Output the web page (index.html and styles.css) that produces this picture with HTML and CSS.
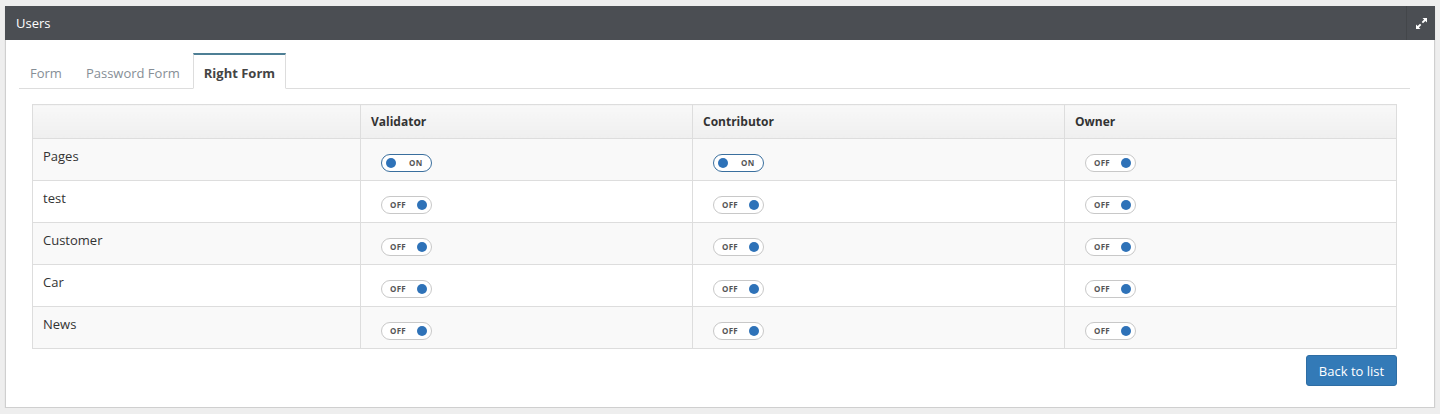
FILE: index.html
```html
<!DOCTYPE html>
<html>
<head>
<meta charset="utf-8">
<link rel="stylesheet" href="styles.css">
</head>
<body>
<div class="panel">
  <div class="panel-head">
    <div class="panel-title">Users</div>
    <div class="panel-tool">
      <svg width="13" height="13" viewBox="0 0 13 13">
        <path d="M7.5 1 H12 V5.5 L10.4 3.9 L8 6.3 L6.7 5 L9.1 2.6 Z" fill="#fff"/>
        <path d="M5.5 12 H1 V7.5 L2.6 9.1 L5 6.7 L6.3 8 L3.9 10.4 Z" fill="#fff"/>
      </svg>
    </div>
  </div>
  <div class="panel-body">
    <ul class="tabs">
      <li class="tab">Form</li>
      <li class="tab">Password Form</li>
      <li class="tab active">Right Form</li>
    </ul>
    <div class="tab-content">
      <table class="grid">
        <thead>
          <tr><th class="c1"></th><th class="c2">Validator</th><th class="c3">Contributor</th><th class="c4">Owner</th></tr>
        </thead>
        <tbody>
          <tr class="odd"><td>Pages</td>
            <td><span class="sw on"><i class="dot"></i><b>ON</b></span></td>
            <td><span class="sw on"><i class="dot"></i><b>ON</b></span></td>
            <td><span class="sw off"><b>OFF</b><i class="dot"></i></span></td></tr>
          <tr><td>test</td>
            <td><span class="sw off"><b>OFF</b><i class="dot"></i></span></td>
            <td><span class="sw off"><b>OFF</b><i class="dot"></i></span></td>
            <td><span class="sw off"><b>OFF</b><i class="dot"></i></span></td></tr>
          <tr class="odd"><td>Customer</td>
            <td><span class="sw off"><b>OFF</b><i class="dot"></i></span></td>
            <td><span class="sw off"><b>OFF</b><i class="dot"></i></span></td>
            <td><span class="sw off"><b>OFF</b><i class="dot"></i></span></td></tr>
          <tr><td>Car</td>
            <td><span class="sw off"><b>OFF</b><i class="dot"></i></span></td>
            <td><span class="sw off"><b>OFF</b><i class="dot"></i></span></td>
            <td><span class="sw off"><b>OFF</b><i class="dot"></i></span></td></tr>
          <tr class="odd"><td>News</td>
            <td><span class="sw off"><b>OFF</b><i class="dot"></i></span></td>
            <td><span class="sw off"><b>OFF</b><i class="dot"></i></span></td>
            <td><span class="sw off"><b>OFF</b><i class="dot"></i></span></td></tr>
        </tbody>
      </table>
      <div class="actions">
        <button class="btn">Back to list</button>
      </div>
    </div>
  </div>
</div>
</body>
</html>
```

FILE: styles.css
```css
* { box-sizing: border-box; }
html, body { margin: 0; padding: 0; }
body {
  background: #eeeeee;
  font-family: "Open Sans", "Liberation Sans", sans-serif;
  font-size: 13px;
  color: #333;
  padding: 6px 5px 0 5px;
}
.panel {
  background: #fff;
  border: 1px solid #cfcfcf;
  border-top: 0;
  box-shadow: 0 1px 1px rgba(0,0,0,0.12);
  height: 402px;
}
.panel-head {
  height: 34px;
  background: #4b4e53;
  display: flex;
  align-items: center;
  margin: 0 -1px;
}
.panel-title {
  flex: 1;
  color: #fff;
  font-size: 13px;
  padding-left: 11px;
  padding-bottom: 1px;
}
.panel-tool {
  width: 29px;
  height: 34px;
  border-left: 1px solid #43464a;
  display: flex;
  align-items: center;
  justify-content: center;
}
.panel-body {
  padding: 13px 24px 0 13px;
}
.tabs {
  list-style: none;
  margin: 0;
  padding: 0;
  display: flex;
  border-bottom: 1px solid #dddddd;
  height: 36px;
}
.tab {
  height: 36px;
  padding: 1px 10px 0 10px;
  border: 1px solid transparent;
  border-top: 2px solid transparent;
  margin-right: 2px;
  color: #868e96;
  line-height: 34px;
  font-size: 13px;
}
.tab.active {
  border-color: #dddddd;
  border-top-color: #4e7f95;
  border-bottom-color: #fff;
  background: #fff;
  color: #444;
  font-weight: bold;
}
.tab-content {
  padding: 15px 13px 0 13px;
}
.grid {
  width: 100%;
  border-collapse: collapse;
  border: 1px solid #dddddd;
}
.grid th, .grid td {
  border: 1px solid #dddddd;
  text-align: left;
  vertical-align: top;
}
.grid th {
  height: 34px;
  background: linear-gradient(#f8f8f8, #efefef);
  font-size: 12px;
  font-weight: bold;
  color: #333;
  padding: 0 10px;
  vertical-align: middle;
}
.c1 { width: 328px; }
.c2 { width: 332px; }
.c3 { width: 372px; }
.grid td {
  height: 42px;
  padding: 7px 10px 8px 10px;
  line-height: 20px;
  font-size: 13px;
}
.grid tr.odd td { background: #f9f9f9; }
.grid td + td { padding-left: 20px; }
.sw {
  display: flex;
  align-items: center;
  width: 51px;
  height: 18px;
  margin-top: 8px;
  border-radius: 9px;
  border: 1px solid #c8c8c8;
  background: #fff;
}
.sw b {
  font-size: 8px;
  font-weight: bold;
  color: #555;
  line-height: 16px;
  letter-spacing: 0.3px;
}
.sw .dot {
  display: block;
  width: 10px;
  height: 10px;
  border-radius: 50%;
  background: #2e72b8;
}
.sw.on { border-color: #3a6f9e; padding-left: 4px; }
.sw.on b { margin-left: 13px; }
.sw.off { padding-left: 8px; justify-content: flex-start; }
.sw.off .dot { margin-left: auto; margin-right: 4px; }
.actions {
  display: flex;
  justify-content: flex-end;
  padding-top: 6px;
}
.btn {
  font-family: "Open Sans", "Liberation Sans", sans-serif;
  font-size: 13px;
  color: #fff;
  background: #337ab7;
  border: 1px solid #2e6da4;
  border-radius: 3px;
  height: 31px;
  padding: 0;
  width: 91px;
  white-space: nowrap;
  text-align: center;
}
```
